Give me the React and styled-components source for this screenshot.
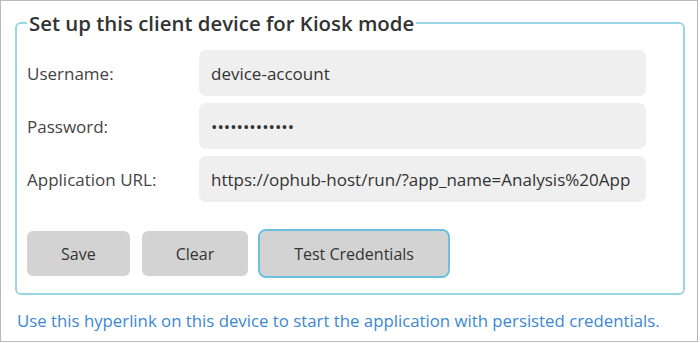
import React from "react";
import styled, { createGlobalStyle } from "styled-components";

const Global = createGlobalStyle`
  html, body { margin: 0; padding: 0; background: #fff; }
  body { font-family: "Open Sans", "Noto Sans", sans-serif; color: #333; }
  * { box-sizing: border-box; }
`;

const Frame = styled.div`
  width: 698px;
  height: 342px;
  border: 1px solid #b9b9b9;
  background: #fff;
  padding: 8px 12px 0 14px;
  display: flex;
  flex-direction: column;
`;

const Fieldset = styled.fieldset`
  margin: 0;
  border: 2px solid #9ad5e4;
  border-radius: 6px;
  padding: 13px 37px 17px 10px;
  min-width: 0;
`;

const Legend = styled.legend`
  padding: 0 2px;
  font-size: 20.4px;
  font-weight: 600;
  color: #333;
  line-height: 28px;
`;

const Form = styled.div`
  display: grid;
  grid-template-columns: 172px 1fr;
  row-gap: 7px;
  align-items: center;
`;

const Label = styled.label`
  font-size: 17px;
  color: #444;
`;

const Field = styled.input`
  height: 46px;
  border: none;
  border-radius: 7px;
  background: #efefef;
  padding: 0 12px;
  font-family: inherit;
  font-size: 17px;
  color: #333;
  outline: none;
  width: 100%;
`;

const Buttons = styled.div`
  display: flex;
  gap: 12px;
  margin-top: 29px;
`;

const Button = styled.button`
  height: 45px;
  padding: 0 34px;
  border: none;
  border-radius: 6px;
  background: #d3d3d3;
  font-family: inherit;
  font-size: 16px;
  color: #333;
  outline: ${(p) => (p.$focused ? "2px solid #6dc0dd" : "none")};
  outline-offset: 0;
`;

const Link = styled.a`
  margin-top: 14px;
  margin-left: 2px;
  font-size: 16.8px;
  color: #3b87d2;
  text-decoration: none;
`;

export default function App() {
  return (
    <>
      <Global />
      <Frame>
        <Fieldset>
          <Legend>Set up this client device for Kiosk mode</Legend>
          <Form>
            <Label>Username:</Label>
            <Field readOnly defaultValue="device-account" />
            <Label>Password:</Label>
            <Field readOnly type="password" defaultValue="1234567890123" />
            <Label>Application URL:</Label>
            <Field readOnly defaultValue="https://ophub-host/run/?app_name=Analysis%20App" />
          </Form>
          <Buttons>
            <Button>Save</Button>
            <Button>Clear</Button>
            <Button $focused>Test Credentials</Button>
          </Buttons>
        </Fieldset>
        <Link href="#">Use this hyperlink on this device to start the application with persisted credentials.</Link>
      </Frame>
    </>
  );
}
